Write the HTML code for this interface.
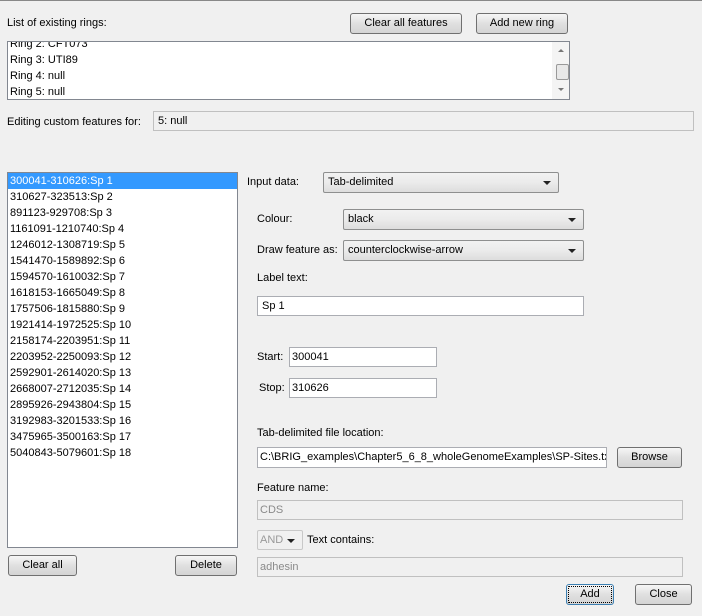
<!DOCTYPE html><html><head><style>
body{margin:0;width:702px;height:616px;background:#f0f0f0;font-family:"Liberation Sans",sans-serif;font-size:11px;color:#000;position:relative;overflow:hidden}
.a{position:absolute;white-space:nowrap}
.btn{position:absolute;border:1px solid #707070;border-radius:3px;background:linear-gradient(#f6f6f6,#e0e0e0 50%,#d4d4d4);text-align:center;box-sizing:border-box;line-height:19px}
.fld{position:absolute;background:#fff;border:1px solid #abadb3;box-sizing:border-box;padding-left:4px;line-height:18px;white-space:nowrap;overflow:hidden}
.dis{background:#f0f0f0;border-color:#c0c0c0;color:#8a8a8a}
.cmb{position:absolute;border:1px solid #8e8f8f;border-radius:2px;background:linear-gradient(#f2f2f2,#ebebeb 50%,#dddddd);box-sizing:border-box;padding-left:4px;line-height:19px}
.cmb:after{content:"";position:absolute;right:7px;top:8px;border:4px solid transparent;border-top:4px solid #222;border-bottom:0}
.row{height:16px;line-height:16px;padding-left:2px}
</style></head><body>
<div class="a" style="left:0;top:0;width:702px;height:1px;background:#888"></div>
<div class="a" style="left:7px;top:17px">List of existing rings:</div>
<div class="btn" style="left:350px;top:13px;width:112px;height:21px">Clear all features</div>
<div class="btn" style="left:476px;top:13px;width:92px;height:21px">Add new ring</div>
<div class="a" style="left:7px;top:41px;width:563px;height:59px;background:#fff;border:1px solid #828790;box-sizing:border-box;overflow:hidden">
<div style="position:relative;top:-6px">
<div class="row">Ring 2: CFT073</div><div class="row">Ring 3: UTI89</div><div class="row">Ring 4: null</div><div class="row">Ring 5: null</div></div>
<div style="position:absolute;right:0;top:0;width:17px;height:57px;background:#f4f4f4">
<div style="position:absolute;left:4px;top:22px;width:11px;height:14px;border:1px solid #999;background:#e8e8e8;border-radius:2px"></div>
<div style="position:absolute;left:6px;top:7px;border:3px solid transparent;border-bottom:3px solid #777;border-top:0"></div>
<div style="position:absolute;left:6px;top:46px;border:3px solid transparent;border-top:3px solid #777;border-bottom:0"></div></div>
</div>
<div class="a" style="left:7px;top:116px">Editing custom features for:</div>
<div class="fld dis" style="left:153px;top:111px;width:541px;height:20px;color:#000">5: null</div>
<div class="a" style="left:7px;top:172px;width:231px;height:376px;background:#fff;border:1px solid #828790;box-sizing:border-box">
<div class="row" style="background:#3399ff;color:#fff">300041-310626:Sp 1</div>
<div class="row">310627-323513:Sp 2</div><div class="row">891123-929708:Sp 3</div><div class="row">1161091-1210740:Sp 4</div><div class="row">1246012-1308719:Sp 5</div><div class="row">1541470-1589892:Sp 6</div><div class="row">1594570-1610032:Sp 7</div><div class="row">1618153-1665049:Sp 8</div><div class="row">1757506-1815880:Sp 9</div><div class="row">1921414-1972525:Sp 10</div><div class="row">2158174-2203951:Sp 11</div><div class="row">2203952-2250093:Sp 12</div><div class="row">2592901-2614020:Sp 13</div><div class="row">2668007-2712035:Sp 14</div><div class="row">2895926-2943804:Sp 15</div><div class="row">3192983-3201533:Sp 16</div><div class="row">3475965-3500163:Sp 17</div><div class="row">5040843-5079601:Sp 18</div>
</div>
<div class="btn" style="left:8px;top:555px;width:69px;height:21px">Clear all</div>
<div class="btn" style="left:175px;top:555px;width:62px;height:21px">Delete</div>
<div class="a" style="left:247px;top:176px">Input data:</div>
<div class="cmb" style="left:323px;top:172px;width:236px;height:21px">Tab-delimited</div>
<div class="a" style="left:257px;top:213px">Colour:</div>
<div class="cmb" style="left:343px;top:209px;width:241px;height:21px">black</div>
<div class="a" style="left:257px;top:244px">Draw feature as:</div>
<div class="cmb" style="left:343px;top:240px;width:241px;height:21px">counterclockwise-arrow</div>
<div class="a" style="left:257px;top:272px">Label text:</div>
<div class="fld" style="left:257px;top:296px;width:327px;height:20px">Sp 1</div>
<div class="a" style="left:257px;top:351px">Start:</div>
<div class="fld" style="left:289px;top:347px;width:148px;height:20px;padding-left:2px">300041</div>
<div class="a" style="left:259px;top:382px">Stop:</div>
<div class="fld" style="left:289px;top:378px;width:148px;height:20px;padding-left:2px">310626</div>
<div class="a" style="left:257px;top:427px">Tab-delimited file location:</div>
<div class="fld" style="left:257px;top:447px;width:350px;height:21px;padding-left:2px;line-height:19px;font-size:11px">C:\BRIG_examples\Chapter5_6_8_wholeGenomeExamples\SP-Sites.txt</div>
<div class="btn" style="left:617px;top:447px;width:65px;height:21px">Browse</div>
<div class="a" style="left:257px;top:482px">Feature name:</div>
<div class="fld dis" style="left:257px;top:500px;width:426px;height:20px;padding-left:2px">CDS</div>
<div class="cmb" style="left:257px;top:530px;width:46px;height:20px;color:#999;background:#f0f0f0;border-color:#c8c8c8;padding-left:2px;line-height:18px">AND</div>
<div class="a" style="left:307px;top:534px">Text contains:</div>
<div class="fld dis" style="left:257px;top:557px;width:426px;height:20px;padding-left:2px">adhesin</div>
<div class="btn" style="left:566px;top:584px;width:48px;height:21px;border-color:#3c7fb1;outline:1px dotted #000;outline-offset:-3px">Add</div>
<div class="btn" style="left:635px;top:584px;width:57px;height:21px">Close</div>
</body></html>
